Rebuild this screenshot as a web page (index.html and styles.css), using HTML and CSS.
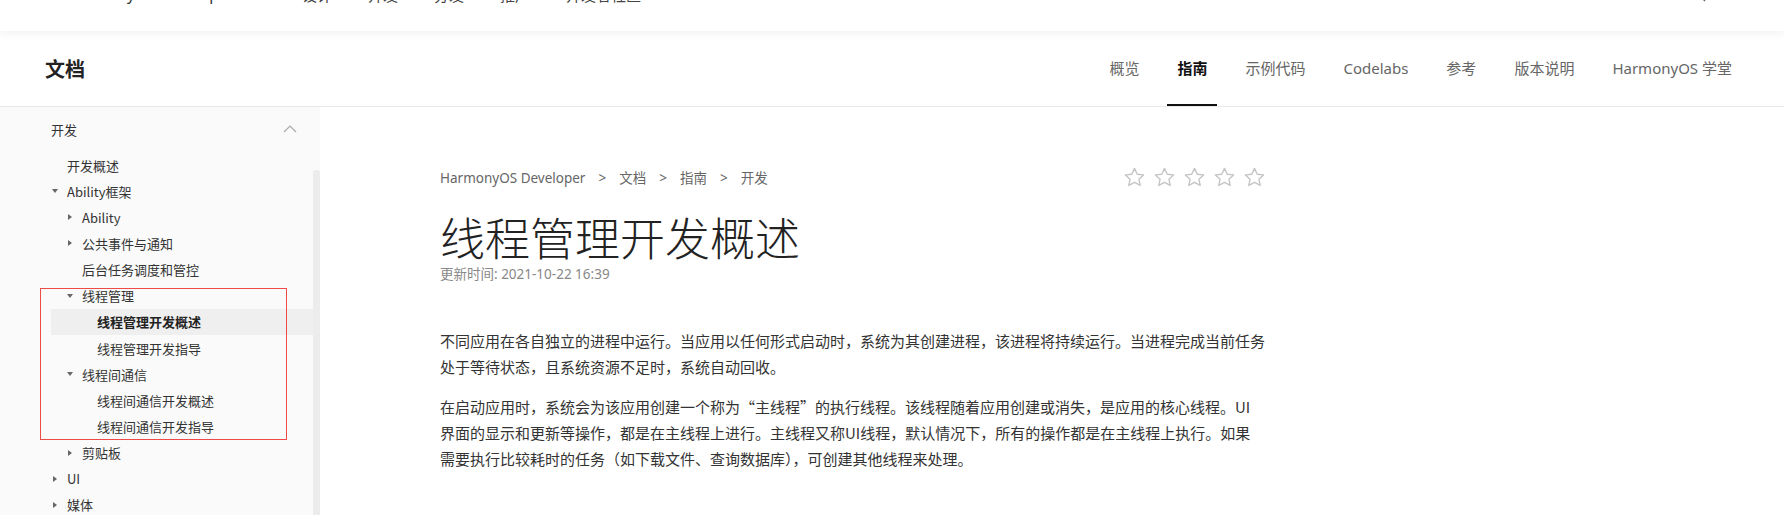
FILE: index.html
```html
<!DOCTYPE html>
<html lang="zh-CN">
<head>
    <meta charset="UTF-8">
    <meta name="viewport" content="width=device-width, initial-scale=1.0">
    <title>线程管理开发概述</title>
    <link rel="stylesheet" href="styles.css">
</head>
<body>
    <header class="site-bar">
        <div class="brand">Harmony<span class="brand-o">O</span>S Developer</div>
        <ul class="site-nav">
            <li>设计</li>
            <li>开发</li>
            <li>分发</li>
            <li>推广</li>
            <li>开发者社区</li>
        </ul>
        <svg class="search" width="16" height="16" viewBox="0 0 16 16">
            <circle cx="7" cy="7" r="5.5" fill="none" stroke="#666" stroke-width="1.4"/>
            <line x1="11" y1="11" x2="15" y2="15" stroke="#666" stroke-width="1.4"/>
        </svg>
    </header>

    <div class="doc-bar">
        <h1 class="doc-title">文档</h1>
        <nav class="doc-nav">
            <a href="#">概览</a>
            <a href="#" class="active">指南</a>
            <a href="#">示例代码</a>
            <a href="#">Codelabs</a>
            <a href="#">参考</a>
            <a href="#">版本说明</a>
            <a href="#">HarmonyOS 学堂</a>
        </nav>
    </div>

    <div class="layout">
        <aside class="sidebar">
            <div class="side-list">
                <div class="side-head">
                    <span>开发</span>
                    <svg width="14" height="8" viewBox="0 0 14 8"><polyline points="1,7 7,1 13,7" fill="none" stroke="#aaa" stroke-width="1.2"/></svg>
                </div>
                <div class="row l1"><span class="slot"></span>开发概述</div>
                <div class="row l1"><span class="slot"><i class="caret down"></i></span>Ability框架</div>
                <div class="row l2"><span class="slot"><i class="caret right"></i></span>Ability</div>
                <div class="row l2"><span class="slot"><i class="caret right"></i></span>公共事件与通知</div>
                <div class="row l2"><span class="slot"></span>后台任务调度和管控</div>
                <div class="row l2"><span class="slot"><i class="caret down"></i></span>线程管理</div>
                <div class="row l3 active"><span class="slot"></span>线程管理开发概述</div>
                <div class="row l3"><span class="slot"></span>线程管理开发指导</div>
                <div class="row l2"><span class="slot"><i class="caret down"></i></span>线程间通信</div>
                <div class="row l3"><span class="slot"></span>线程间通信开发概述</div>
                <div class="row l3"><span class="slot"></span>线程间通信开发指导</div>
                <div class="row l2"><span class="slot"><i class="caret right"></i></span>剪贴板</div>
                <div class="row l1"><span class="slot"><i class="caret right"></i></span>UI</div>
                <div class="row l1"><span class="slot"><i class="caret right"></i></span>媒体</div>
            </div>
            <div class="scroll-track"><div class="scroll-thumb"></div></div>
            <!-- 标注框 -->
            <div class="mark-box"></div>
        </aside>

        <main class="content">
            <div class="article">
                <div class="crumbs-row">
                    <div class="crumbs">
                        <span>HarmonyOS Developer</span><span class="sep">&gt;</span><span>文档</span><span class="sep">&gt;</span><span>指南</span><span class="sep">&gt;</span><span>开发</span>
                    </div>
                    <div class="stars">
                        <svg width="23" height="23" viewBox="0 0 24 24"><polygon points="12,2.5 14.9,8.6 21.5,9.3 16.6,13.8 18,20.3 12,17 6,20.3 7.4,13.8 2.5,9.3 9.1,8.6"/></svg>
                        <svg width="23" height="23" viewBox="0 0 24 24"><polygon points="12,2.5 14.9,8.6 21.5,9.3 16.6,13.8 18,20.3 12,17 6,20.3 7.4,13.8 2.5,9.3 9.1,8.6"/></svg>
                        <svg width="23" height="23" viewBox="0 0 24 24"><polygon points="12,2.5 14.9,8.6 21.5,9.3 16.6,13.8 18,20.3 12,17 6,20.3 7.4,13.8 2.5,9.3 9.1,8.6"/></svg>
                        <svg width="23" height="23" viewBox="0 0 24 24"><polygon points="12,2.5 14.9,8.6 21.5,9.3 16.6,13.8 18,20.3 12,17 6,20.3 7.4,13.8 2.5,9.3 9.1,8.6"/></svg>
                        <svg width="23" height="23" viewBox="0 0 24 24"><polygon points="12,2.5 14.9,8.6 21.5,9.3 16.6,13.8 18,20.3 12,17 6,20.3 7.4,13.8 2.5,9.3 9.1,8.6"/></svg>
                    </div>
                </div>
                <h2 class="title">线程管理开发概述</h2>
                <p class="updated">更新时间: 2021-10-22 16:39</p>

                <p class="para first">不同应用在各自独立的进程中运行。当应用以任何形式启动时，系统为其创建进程，该进程将持续运行。当进程完成当前任务<br>处于等待状态，且系统资源不足时，系统自动回收。</p>
                <p class="para">在启动应用时，系统会为该应用创建一个称为“主线程”的执行线程。该线程随着应用创建或消失，是应用的核心线程。UI<br>界面的显示和更新等操作，都是在主线程上进行。主线程又称UI线程，默认情况下，所有的操作都是在主线程上执行。如果<br>需要执行比较耗时的任务（如下载文件、查询数据库），可创建其他线程来处理。</p>
            </div>
        </main>
    </div>
</body>
</html>
```

FILE: styles.css
```css
*{
    box-sizing: border-box;
}
body{
    margin: 0;
    height: 515px;
    overflow: hidden;
    background-color: #fff;
    color: #333;
    font-family: "Noto Sans", "Noto Sans CJK SC", sans-serif;
}

/* 顶部站点栏（大部分已滚出） */
.site-bar{
    display: flex;
    align-items: center;

    position: relative;
    z-index: 2;
    height: 74px;
    margin-top: -43px;
    padding: 0 78px 0 67px;
    background-color: #fff;
    box-shadow: 0 3px 8px rgba(0, 0, 0, 0.05);
    font-size: 15.5px;
}
.brand{
    color: #333;
}
.brand-o{
    color: #3f86ff;
}
.site-nav{
    display: flex;
    gap: 36px;

    list-style: none;
    margin: 0 0 0 68px;
    padding: 0;
    font-family: "Noto Sans CJK SC", sans-serif;
    font-size: 15px;
    color: #444;
}
.search{
    margin-left: auto;
}

/* 文档栏 */
.doc-bar{
    display: flex;
    align-items: center;

    height: 76px;
    padding: 0 42px 0 45px;
    border-bottom: 1px solid #e8e8e8;
}
.doc-title{
    margin: 0;
    font-family: "Noto Sans CJK SC", sans-serif;
    font-size: 20px;
    font-weight: 700;
    color: #222;
}
.doc-nav{
    display: flex;
    gap: 18px;

    height: 100%;
    margin-left: auto;
}
.doc-nav a{
    display: flex;
    align-items: center;

    padding: 0 10px;
    border-bottom: 2px solid transparent;
    color: #666;
    font-size: 15px;
    text-decoration: none;
}
.doc-nav a.active{
    color: #111;
    font-weight: 700;
    border-bottom-color: #111;
}

.layout{
    display: flex;
    height: 408px;
}

/* 左侧目录 */
.sidebar{
    display: flex;

    position: relative;
    width: 320px;
    flex-shrink: 0;
    background-color: #fafafa;
}
.side-list{
    flex: 1;
    padding-left: 51px;
    font-family: "Noto Sans CJK SC", sans-serif;
    font-size: 13px;
    color: #333;
}
.side-head{
    display: flex;
    align-items: center;
    justify-content: space-between;

    height: 26px;
    margin: 9px 0 10px;
    padding-right: 16px;
}
.row{
    display: flex;
    align-items: center;
    height: 26.15px;
    white-space: nowrap;
}
.row.l2{
    padding-left: 15px;
}
.row.l3{
    padding-left: 30px;
}
.row.active{
    font-weight: 700;
    color: #222;
    background-color: #efefef;
}
.slot{
    display: flex;
    align-items: center;
    width: 16px;
    flex-shrink: 0;
    padding-left: 1px;
}
.caret{
    display: block;
    width: 0;
    height: 0;
}
.caret.down{
    border-left: 3.5px solid transparent;
    border-right: 3.5px solid transparent;
    border-top: 4px solid #666;
}
.caret.right{
    margin-left: 1px;
    border-top: 3.5px solid transparent;
    border-bottom: 3.5px solid transparent;
    border-left: 4px solid #666;
}
.scroll-track{
    width: 7px;
    padding-top: 63px;
}
.scroll-thumb{
    height: 100%;
    background-color: #ececec;
    border-radius: 3px 3px 0 0;
}
.mark-box{
    position: absolute;
    left: 40px;
    top: 181px;
    width: 247px;
    height: 152px;
    border: 1px solid #ee4a4a;
}

/* 正文 */
.content{
    flex: 1;
    padding: 60px 0 0 120px;
}
.article{
    width: 832px;
}
.crumbs-row{
    display: flex;
    align-items: center;
    justify-content: space-between;
    height: 20px;
    padding-right: 6px;
}
.crumbs{
    font-size: 13.5px;
    color: #666;
}
.crumbs .sep{
    margin: 0 13px;
}
.stars{
    display: flex;
    gap: 7px;
}
.stars polygon{
    fill: none;
    stroke: #c4c4c4;
    stroke-width: 1.4;
    stroke-linejoin: round;
}
.title{
    margin: 23px 0 0;
    font-family: "Noto Sans CJK SC", sans-serif;
    font-size: 45px;
    font-weight: 300;
    line-height: 54px;
    color: #222;
}
.updated{
    margin: 0;
    font-size: 13.5px;
    line-height: 20px;
    color: #888;
}
.para{
    margin: 14px 0 0;
    font-family: "Noto Sans CJK SC", sans-serif;
    font-size: 15px;
    line-height: 26px;
    color: #333;
}
.para.first{
    margin-top: 44px;
}
```
